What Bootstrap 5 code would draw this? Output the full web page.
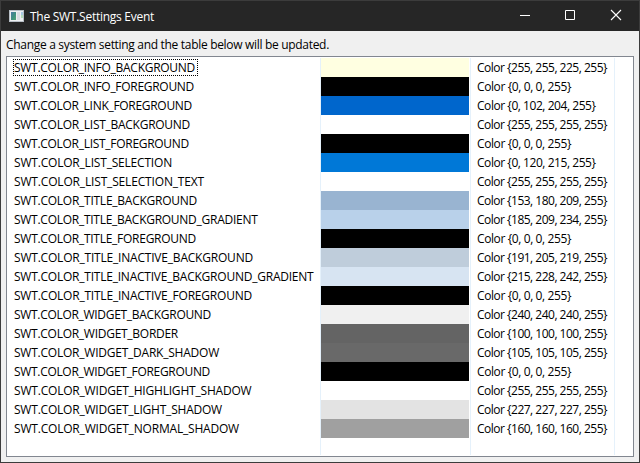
<!DOCTYPE html>
<html lang="en">
<head>
<meta charset="utf-8">
<title>The SWT.Settings Event</title>
<link href="https://cdn.jsdelivr.net/npm/bootstrap@5.3.0/dist/css/bootstrap.min.css" rel="stylesheet">
<style>
body{font:12px/19px "Open Sans","Noto Sans",sans-serif;color:#000;overflow:hidden}
.window{width:640px;height:463px;background:#f0f0f0;border:1px solid #3c3c3c}
.titlebar{height:30px;background:#262626;color:#fff;padding-left:8px}
.caption-text{padding-left:5px}
.caption-btn{width:46px;height:30px}
.caption-btn svg{display:block}
.label-line{height:25px;padding:4px 0 0 5px}
.listing{margin:0 5px 5px;border:1px solid #828790;background:#fff;padding:1px 0}
.name-col{width:314px;border-right:1px solid #e5f1fb;padding-left:7px}
.swatch-col{width:150px;border-right:1px solid #e5f1fb}
.value-col{width:144px;border-right:1px solid #e5f1fb;padding-left:6px}
.name-col>div,.value-col>div{height:19px;line-height:19px}
.swatch-col>div{height:19px;width:148px}
.focused{position:relative}
.focused svg{position:absolute;left:-1px;top:1px}
</style>
</head>
<body>
<div class="window d-flex flex-column">
  <header class="titlebar d-flex align-items-center flex-shrink-0">
    <svg width="16" height="14" viewBox="0 0 16 14" shape-rendering="crispEdges">
      <defs><linearGradient id="pane" x1="0" y1="0" x2="1" y2="1"><stop offset="0" stop-color="#4c79a5"/><stop offset=".55" stop-color="#3f917f"/><stop offset="1" stop-color="#55a575"/></linearGradient></defs>
      <path fill="#b8bfc6" d="M0 1h15v12H0z"/><path fill="#eef0f2" d="M1 2h13v10H1z"/>
      <path fill="url(#pane)" d="M2 3h5v8H2z"/><path fill="#d9dde2" d="M8 3h3v8H8z"/>
      <path fill="#a7c8e3" d="M12 3h2v3h-2z"/><path fill="#b5dcba" d="M12 6h2v3h-2z"/>
    </svg>
    <span class="caption-text me-auto text-nowrap"><span data-w="124">The SWT.Settings Event</span></span>
    <div class="caption-btn"><svg width="46" height="30"><path fill="#fff" d="M19 14h10v1H19z"/></svg></div>
    <div class="caption-btn"><svg width="46" height="30"><path fill="none" stroke="#fff" d="M18.500 9.500h9v9h-9z"/></svg></div>
    <div class="caption-btn"><svg width="46" height="30"><path fill="none" stroke="#fff" stroke-width="1.100" d="M18 9l10 10M28 9l-10 10"/></svg></div>
  </header>
  <div class="label-line text-nowrap flex-shrink-0"><span data-w="323">Change a system setting and the table below will be updated.</span></div>
  <main class="listing d-flex flex-grow-1 text-nowrap">
    <div class="name-col" id="names"></div>
    <div class="swatch-col" id="swatches"></div>
    <div class="value-col" id="values"></div>
  </main>
</div>
<script src="https://cdn.jsdelivr.net/npm/bootstrap@5.3.0/dist/js/bootstrap.bundle.min.js"></script>
<script>
// name, rgb, width of the name in pixels
const rows = [
  ['INFO_BACKGROUND', '255, 255, 225', 181],
  ['INFO_FOREGROUND', '0, 0, 0', 180],
  ['LINK_FOREGROUND', '0, 102, 204', 178],
  ['LIST_BACKGROUND', '255, 255, 255', 176],
  ['LIST_FOREGROUND', '0, 0, 0', 175],
  ['LIST_SELECTION', '0, 120, 215', 158],
  ['LIST_SELECTION_TEXT', '255, 255, 255', 190],
  ['TITLE_BACKGROUND', '153, 180, 209', 183],
  ['TITLE_BACKGROUND_GRADIENT', '185, 209, 234', 243.5],
  ['TITLE_FOREGROUND', '0, 0, 0', 182],
  ['TITLE_INACTIVE_BACKGROUND', '191, 205, 219', 239],
  ['TITLE_INACTIVE_BACKGROUND_GRADIENT', '215, 228, 242', 299.5],
  ['TITLE_INACTIVE_FOREGROUND', '0, 0, 0', 238],
  ['WIDGET_BACKGROUND', '240, 240, 240', 197],
  ['WIDGET_BORDER', '100, 100, 100', 164],
  ['WIDGET_DARK_SHADOW', '105, 105, 105', 205],
  ['WIDGET_FOREGROUND', '0, 0, 0', 196],
  ['WIDGET_HIGHLIGHT_SHADOW', '255, 255, 255', 237.5],
  ['WIDGET_LIGHT_SHADOW', '227, 227, 227', 208],
  ['WIDGET_NORMAL_SHADOW', '160, 160, 160', 225]
];
const valueWidth = {7: 94, 11: 118.5, 13: 130};
const add = (id, html) => document.getElementById(id).insertAdjacentHTML('beforeend', html);
rows.forEach(([name, rgb, w], i) => {
  const ring = i ? '' : '<svg width="185" height="17" shape-rendering="crispEdges"><path fill="none" stroke="#000" stroke-dasharray="1 1" d="M0 .5h185M0 16.500h185M.5 2v14M184.500 2v14"/></svg>';
  add('names', `<div class="${i ? '' : 'focused'}">${ring}<span data-w="${w}">SWT.COLOR_${name}</span></div>`);
  add('swatches', `<div style="background:rgb(${rgb})"></div>`);
  add('values', `<div><span data-w="${valueWidth[rgb.length]}">Color {${rgb}, 255}</span></div>`);
});
document.querySelectorAll('[data-w]').forEach(el => {
  const extra = el.dataset.w - el.getBoundingClientRect().width;
  el.style.letterSpacing = extra / el.textContent.length + 'px';
});
</script>
</body>
</html>
